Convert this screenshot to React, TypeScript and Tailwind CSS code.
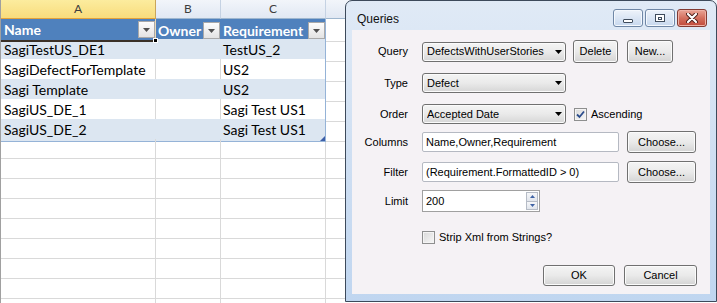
import React from 'react';

const rows = [
  { name: 'SagiTestUS_DE1', owner: '', req: 'TestUS_2' },
  { name: 'SagiDefectForTemplate', owner: '', req: 'US2' },
  { name: 'Sagi Template', owner: '', req: 'US2' },
  { name: 'SagiUS_DE_1', owner: '', req: 'Sagi Test US1' },
  { name: 'SagiUS_DE_2', owner: '', req: 'Sagi Test US1' },
];

// Excel-style filter dropdown in the table header
function FilterButton() {
  return (
    <div className="flex h-[17px] w-[17px] flex-none items-center justify-center border border-[#a9a9a9] bg-linear-to-b from-[#fdfdfd] to-[#e3e3e3]">
      <svg width="7" height="4" viewBox="0 0 7 4">
        <path d="M0 0h7L3.5 4z" fill="#505050" />
      </svg>
    </div>
  );
}

function Sheet() {
  return (
    <div className="flex h-full flex-col border-l border-[#a0a0a0] font-['Lato',sans-serif] text-[14px] text-black">
      {/* Column letters */}
      <div className="grid h-[19px] flex-none grid-cols-[155px_65px_105px_1fr] text-[12px] text-[#3d3d3d]">
        <div className="flex items-center justify-center border-r border-b border-r-[#c9a55a] border-b-[#e3a23a] bg-linear-to-b from-[#fcec9e] to-[#f8dc7c]">A</div>
        <div className="flex items-center justify-center border-r border-b border-r-[#c5d2e3] border-b-[#9eb6ce] bg-linear-to-b from-[#f2f5fa] to-[#e1e8f3]">B</div>
        <div className="flex items-center justify-center border-r border-b border-r-[#c5d2e3] border-b-[#9eb6ce] bg-linear-to-b from-[#f2f5fa] to-[#e1e8f3]">C</div>
        <div className="border-b border-[#9eb6ce] bg-linear-to-b from-[#f2f5fa] to-[#e1e8f3]" />
      </div>

      {/* Table header */}
      <div className="grid h-[20px] flex-none grid-cols-[155px_65px_105px_1fr] font-bold text-white">
        <div className="relative flex items-center justify-between border-r border-b-2 border-r-[#e7d9b8] border-b-[#3a3027] bg-[#4f81bd] pl-[3px]">
          <span>Name</span>
          <FilterButton />
          <div className="absolute -right-[3px] -bottom-[3px] h-[5px] w-[5px] border border-white bg-black" />
        </div>
        <div className="flex items-center justify-between bg-[#4f81bd] pr-[1px] pl-[2px]">
          <span>Owner</span>
          <FilterButton />
        </div>
        <div className="flex items-center justify-between border-r border-[#95b3d7] bg-[#4f81bd] pl-[2px]">
          <span>Requirement</span>
          <FilterButton />
        </div>
        <div className="border-b border-[#d9d9d9]" />
      </div>

      {/* Data rows */}
      {rows.map((r, i) => {
        const band = i % 2 === 0 ? 'bg-[#dce6f1]' : 'bg-white';
        const last = i === rows.length - 1;
        return (
          <div key={r.name} className="grid h-[20px] flex-none grid-cols-[155px_65px_105px_1fr]">
            <div className={`flex items-end border-b border-[#95b3d7] pb-[1px] pl-[3px] ${band} ${i % 2 ? 'border-r border-r-[#d9d9d9]' : ''}`}>{r.name}</div>
            <div className={`flex items-end border-b border-[#95b3d7] pb-[1px] pl-[2px] ${band} ${i % 2 ? 'border-r border-r-[#d9d9d9]' : ''}`}>{r.owner}</div>
            <div className={`relative flex items-end border-r border-b border-[#95b3d7] pb-[1px] pl-[2px] ${band}`}>
              {r.req}
              {last && (
                <svg className="absolute right-0 bottom-0" width="5" height="5" viewBox="0 0 5 5">
                  <path d="M5 0V5H0z" fill="#3d5fa8" />
                </svg>
              )}
            </div>
            <div className="border-b border-[#d9d9d9]" />
          </div>
        );
      })}

      {/* Empty grid */}
      {Array.from({ length: 9 }).map((_, i) => (
        <div key={i} className="grid h-[20px] flex-none grid-cols-[155px_65px_105px_1fr]">
          <div className="border-r border-b border-[#d9d9d9]" />
          <div className="border-r border-b border-[#d9d9d9]" />
          <div className="border-r border-b border-[#d9d9d9]" />
          <div className="border-b border-[#d9d9d9]" />
        </div>
      ))}
    </div>
  );
}

function WinButton({ children, className = '', w = 'w-[45px]', h = 'h-[23px]' }: { children: React.ReactNode; className?: string; w?: string; h?: string }) {
  return (
    <div
      className={`flex flex-none items-center justify-center rounded-[3px] border border-[#707070] bg-linear-to-b from-[#f4f4f4] via-[#eaeaea] to-[#d4d4d4] shadow-[inset_0_0_0_1px_#fbfbfb] ${w} ${h} ${className}`}
    >
      {children}
    </div>
  );
}

function Select({ value }: { value: string }) {
  return (
    <div className="flex h-[20px] w-[144px] flex-none items-center overflow-hidden rounded-[3px] border border-[#707070] bg-linear-to-b from-[#f4f4f4] via-[#eaeaea] to-[#d6d6d6] pr-[3px] pl-[4px] shadow-[inset_0_0_0_1px_#fbfbfb]">
      <span className="flex-1 truncate whitespace-nowrap">{value}</span>
      <svg className="ml-[2px] flex-none" width="7" height="4" viewBox="0 0 7 4">
        <path d="M0 0h7L3.5 4z" fill="#000" />
      </svg>
    </div>
  );
}

function Checkbox({ checked }: { checked?: boolean }) {
  return (
    <div className="flex h-[13px] w-[13px] flex-none items-center justify-center border border-[#8e8f8f] bg-linear-to-br from-[#d9d9d9] to-[#f7f7f7] shadow-[inset_0_0_0_1px_#f4f4f4]">
      {checked && (
        <svg width="9" height="9" viewBox="0 0 9 9">
          <path d="M1 4.5L3.5 7L8 1.5" fill="none" stroke="#2b4c8c" strokeWidth="1.8" />
        </svg>
      )}
    </div>
  );
}

function Row({ label, mt, h, children }: { label: string; mt: string; h: string; children: React.ReactNode }) {
  return (
    <div className={`flex flex-none items-center ${mt} ${h}`}>
      <div className="w-[56px] flex-none text-right">{label}</div>
      <div className="ml-[14px] flex items-center">{children}</div>
    </div>
  );
}

function TextBox({ value, w = 'w-[197px]' }: { value: string; w?: string }) {
  return (
    <div className={`flex h-[20px] flex-none items-center rounded-[2px] border border-[#b5b9c2] bg-white pl-[3px] ${w}`}>
      <span className="whitespace-nowrap">{value}</span>
    </div>
  );
}

function QueriesDialog() {
  return (
    <div className="absolute top-0 left-[345px] flex h-[302px] w-[372px] flex-col rounded-t-[7px] border border-[#3d4a5b] bg-linear-to-b from-[#e0eaf6] via-[#cfdff2] to-[#c0d6f0] px-[6px] pb-[7px] font-['Liberation_Sans',Arial,sans-serif] text-[11px] text-black">
      {/* Title bar */}
      <div className="flex h-[29px] flex-none items-start justify-between pr-[3px]">
        <span className="mt-[9px] pl-[5px] text-[12px] text-[#111]">Queries</span>
        <div className="mt-[8px] flex gap-[2px]">
          <div className="flex h-[18px] w-[30px] items-center justify-center rounded-[3px] border border-[#6f87a6] bg-linear-to-b from-[#eef3fa] to-[#c7d8ee] shadow-[inset_0_0_0_1px_#f4f8fd]">
            <div className="mt-[5px] h-[4px] w-[10px] rounded-[1px] border border-[#3f4c5c] bg-white" />
          </div>
          <div className="flex h-[18px] w-[30px] items-center justify-center rounded-[3px] border border-[#6f87a6] bg-linear-to-b from-[#eef3fa] to-[#c7d8ee] shadow-[inset_0_0_0_1px_#f4f8fd]">
            <div className="flex h-[8px] w-[10px] items-center justify-center border border-[#3f4c5c] bg-white">
              <div className="h-[3px] w-[4px] border border-[#3f4c5c]" />
            </div>
          </div>
          <div className="flex h-[18px] w-[30px] items-center justify-center rounded-[3px] border border-[#823b33] bg-linear-to-b from-[#e9a597] via-[#d4705f] to-[#c04a3a] shadow-[inset_0_0_0_1px_#eeb1a5]">
            <svg width="12" height="10" viewBox="0 0 12 10">
              <path d="M2 1L10 9M10 1L2 9" stroke="#4a1d18" strokeWidth="4" strokeLinecap="round" />
              <path d="M2 1L10 9M10 1L2 9" stroke="#fff" strokeWidth="2.2" strokeLinecap="round" />
            </svg>
          </div>
        </div>
      </div>

      {/* Client area */}
      <div className="flex flex-1 flex-col bg-[#f5f2f5]">
        <Row label="Query" mt="mt-[10px]" h="h-[23px]">
          <Select value="DefectsWithUserStories" />
          <WinButton className="ml-[7px]">Delete</WinButton>
          <WinButton className="ml-[9px]" w="w-[46px]">New...</WinButton>
        </Row>
        <Row label="Type" mt="mt-[10px]" h="h-[20px]">
          <Select value="Defect" />
        </Row>
        <Row label="Order" mt="mt-[11px]" h="h-[20px]">
          <Select value="Accepted Date" />
          <div className="ml-[8px] flex items-center">
            <Checkbox checked />
            <span className="ml-[4px] text-[11px]">Ascending</span>
          </div>
        </Row>
        <Row label="Columns" mt="mt-[7px]" h="h-[22px]">
          <TextBox value="Name,Owner,Requirement" />
          <WinButton className="ml-[8px]" w="w-[69px]" h="h-[22px]">Choose...</WinButton>
        </Row>
        <Row label="Filter" mt="mt-[8px]" h="h-[22px]">
          <TextBox value="(Requirement.FormattedID > 0)" />
          <WinButton className="ml-[8px]" w="w-[69px]" h="h-[22px]">Choose...</WinButton>
        </Row>
        <Row label="Limit" mt="mt-[7px]" h="h-[22px]">
          <div className="flex h-[22px] w-[118px] items-stretch border border-[#a0a0a0] bg-white">
            <span className="flex flex-1 items-center pl-[3px]">200</span>
            <div className="my-[1px] mr-[1px] flex w-[12px] flex-col border border-[#b6bcc6]">
              <div className="flex flex-1 items-center justify-center border-b border-[#b6bcc6] bg-linear-to-b from-[#f6f7f9] to-[#e1e5ec]">
                <svg width="5" height="3" viewBox="0 0 5 3"><path d="M0 3h5L2.5 0z" fill="#3f63a5" /></svg>
              </div>
              <div className="flex flex-1 items-center justify-center bg-linear-to-b from-[#f6f7f9] to-[#e1e5ec]">
                <svg width="5" height="3" viewBox="0 0 5 3"><path d="M0 0h5L2.5 3z" fill="#3f63a5" /></svg>
              </div>
            </div>
          </div>
        </Row>
        <Row label="" mt="mt-[19px]" h="h-[13px]">
          <Checkbox />
          <span className="ml-[4px]">Strip Xml from Strings?</span>
        </Row>
        <div className="mt-[21px] flex flex-none justify-end gap-[9px] pr-[13px]">
          <WinButton w="w-[72px]" h="h-[21px]">OK</WinButton>
          <WinButton w="w-[73px]" h="h-[21px]">Cancel</WinButton>
        </div>
      </div>
    </div>
  );
}

export default function App() {
  return (
    <div className="relative h-[303px] w-[717px] overflow-hidden bg-white">
      <Sheet />
      <QueriesDialog />
    </div>
  );
}
